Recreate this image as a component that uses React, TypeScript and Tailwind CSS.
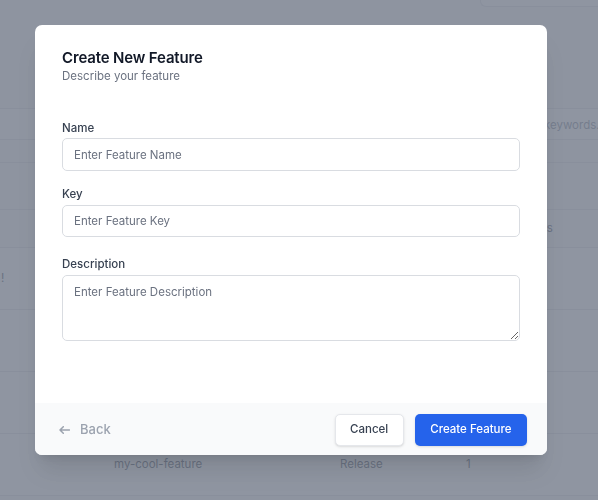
import React from "react";

const rows = [
  { name: "", type: "", count: "", note: "!" },
  { name: "", type: "", count: "", note: "" },
  { name: "", type: "", count: "", note: "" },
  { name: "my-cool-feature", type: "Release", count: "1", note: "" },
];

// ------------------ FEATURES PAGE (behind the dialog) ----------------
function FeaturesPage() {
  return (
    <div className="h-screen bg-gray-50 text-[11.5px] text-gray-500 overflow-hidden">
      <div className="h-[108px] flex justify-end">
        <div className="w-[118px] h-[7px] rounded-bl-md bg-white border-l border-b border-gray-200" />
      </div>

      {/* search */}
      <div className="h-[32px] border-y border-gray-200 bg-white flex items-center pt-[3px]">
        <span className="pl-[486px] whitespace-nowrap text-gray-400">
          Search by keywords...
        </span>
      </div>
      <div className="h-[22px]" />

      {/* table */}
      <div className="h-[47px] border-t border-gray-200" />
      <div className="h-[38px] border-t border-gray-200 bg-gray-50 flex items-center">
        <span className="pl-[479px] whitespace-nowrap text-gray-500">
          Environments
        </span>
      </div>
      {rows.map((r, i) => (
        <div
          key={i}
          className="h-[62px] border-t border-gray-200 bg-white flex items-center whitespace-nowrap"
        >
          <span className="w-[114px] pl-[1px]">{r.note}</span>
          <span className="w-[226px]">{r.name}</span>
          <span className="w-[126px]">{r.type}</span>
          <span>{r.count}</span>
        </div>
      ))}
      <div className="border-t border-gray-200 h-10" />
    </div>
  );
}

function BackArrow() {
  return (
    <svg width="11" height="8" viewBox="0 0 11 8" fill="none">
      <path
        d="M10.5 4H1M4.3 0.7L1 4l3.3 3.3"
        stroke="currentColor"
        strokeWidth="1.5"
        strokeLinecap="round"
        strokeLinejoin="round"
      />
    </svg>
  );
}

// ------------------ CREATE FEATURE DIALOG ----------------
function CreateFeatureDialog() {
  const inputCls =
    "block w-full rounded-[5px] border border-[#d9dce1] px-[11px] text-[11.5px] text-gray-900 placeholder:text-[#6b7280] outline-none";

  return (
    <div className="fixed inset-0 bg-gray-500/75">
      <div className="ml-[35px] mt-[25px] w-[512px] rounded-[7px] bg-white shadow-xl overflow-hidden">
        <div className="px-[27px] pt-[22px] pb-[62px]">
          <h3 className="text-[15px] leading-[21px] tracking-[-0.01em] font-semibold text-[#111827]">
            Create New Feature
          </h3>
          <p className="text-[11.5px] leading-4 text-[#6b7280]">Describe your feature</p>

          <label className="block mt-[36px] text-[11.5px] leading-4 font-medium text-[#374151]">
            Name
          </label>
          <input
            className={`mt-[2px] h-[33px] ${inputCls}`}
            placeholder="Enter Feature Name"
          />

          <label className="block mt-[15px] text-[11.5px] leading-4 font-medium text-[#374151]">
            Key
          </label>
          <input
            className={`mt-[3px] h-[32px] ${inputCls}`}
            placeholder="Enter Feature Key"
          />

          <label className="block mt-[19px] text-[11.5px] leading-4 font-medium text-[#374151]">
            Description
          </label>
          <textarea
            className={`mt-[3px] h-[66px] pt-[8px] pb-[4px] leading-4 ${inputCls}`}
            placeholder="Enter Feature Description"
          />
        </div>

        <div className="h-[52px] bg-[#f9fafb] pl-6 pr-5 pt-[2px] flex items-center justify-between">
          <button className="flex items-center gap-[10px] text-[13px] font-medium text-[#9ca3af]">
            <BackArrow />
            Back
          </button>
          <div className="flex gap-[11px]">
            <button className="h-8 px-[14.5px] rounded-[5px] border border-[#e5e7eb] bg-white text-[11.5px] font-medium text-[#374151] shadow-sm">
              Cancel
            </button>
            <button className="h-8 px-[15.5px] rounded-[5px] bg-[#2563eb] text-[11.5px] font-medium text-white shadow-sm">
              Create Feature
            </button>
          </div>
        </div>
      </div>
    </div>
  );
}

export default function App() {
  return (
    <div style={{ fontFamily: "Inter, 'Noto Sans', sans-serif" }}>
      <FeaturesPage />
      <CreateFeatureDialog />
    </div>
  );
}
